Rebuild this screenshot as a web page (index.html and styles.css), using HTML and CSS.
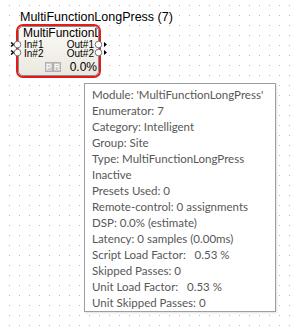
FILE: index.html
```html
<!DOCTYPE html>
<html lang="en">
<head>
    <meta charset="UTF-8">
    <title>MultiFunctionLongPress</title>
    <link rel="stylesheet" href="styles.css">
</head>
<body>
    <div class="canvas">
        <div class="module">
            <div class="module-name">MultiFunctionLongPress (7)</div>
            <div class="block">
                <div class="block-inner">
                    <div class="block-title">MultiFunctionLongPress</div>
                    <div class="pins"><span>In#1</span><span>Out#1</span></div>
                    <div class="pins"><span>In#2</span><span>Out#2</span></div>
                    <div class="status">
                        <span class="flag">P</span><span class="flag">R</span>
                        <span class="dsp">0.0%</span>
                    </div>
                </div>
                <svg class="ports" width="100" height="20" viewBox="0 0 100 20">
                    <path d="M-5 2.5 L-2.5 4.5 L-5 6.5 M-5 10.5 L-2.5 12.5 L-5 14.5" fill="none" stroke="#000" stroke-width="1.6"/>
                    <circle cx="1.5" cy="4.5" r="3.3" fill="#fff" stroke="#777" stroke-width="1"/>
                    <circle cx="1.5" cy="12.5" r="3.3" fill="#fff" stroke="#777" stroke-width="1"/>
                    <circle cx="82.5" cy="4.5" r="3.3" fill="#fff" stroke="#777" stroke-width="1"/>
                    <circle cx="82.5" cy="12.5" r="3.3" fill="#fff" stroke="#777" stroke-width="1"/>
                    <path d="M88 2 L91 4.5 L88 7 Z M88 10 L91 12.5 L88 15 Z" fill="#000"/>
                </svg>
            </div>
        </div>

        <div class="tooltip">
            <div>Module: 'MultiFunctionLongPress'</div>
            <div>Enumerator: 7</div>
            <div>Category: Intelligent</div>
            <div>Group: Site</div>
            <div>Type: MultiFunctionLongPress</div>
            <div>Inactive</div>
            <div>Presets Used: 0</div>
            <div>Remote-control: 0 assignments</div>
            <div>DSP: 0.0% (estimate)</div>
            <div>Latency: 0 samples (0.00ms)</div>
            <div>Script Load Factor: &nbsp; 0.53 %</div>
            <div>Skipped Passes: 0</div>
            <div>Unit Load Factor: &nbsp; 0.53 %</div>
            <div>Unit Skipped Passes: 0</div>
        </div>
    </div>
</body>
</html>
```

FILE: styles.css
```css
body {
    margin: 0;
    width: 291px;
    height: 328px;
    overflow: hidden;
    background: #fff;
    font-family: "Liberation Sans", Arial, sans-serif;
}
.canvas {
    width: 291px;
    height: 328px;
    padding-top: 11px;
    box-sizing: border-box;
    background-image: radial-gradient(circle at 9.5px 5.5px, #b8b8b8 0.7px, transparent 1px);
    background-size: 10px 10px;
}
.module {
    margin-left: 16px;
    width: 85px;
}
.module-name {
    height: 13px;
    line-height: 13px;
    margin-left: 4px;
    font-size: 12.5px;
    color: #000;
    white-space: nowrap;
}
.block {
    position: relative;
    height: 54px;
    box-sizing: border-box;
    border: 2px solid #e41b1b;
    border-radius: 7px;
}
.block-inner {
    height: 100%;
    box-sizing: border-box;
    border: 1px solid #8c8c8c;
    border-radius: 5px;
    background: linear-gradient(#fbfaf6, #ebe8df);
    padding: 0 0 0 5px;
    overflow: hidden;
}
.block-title {
    font-size: 12px;
    line-height: 13px;
    white-space: nowrap;
    overflow: hidden;
    margin: 0 0 0 -1px;
}
.pins {
    display: flex;
    justify-content: space-between;
    font-size: 10px;
    line-height: 9px;
    padding-right: 4px;
}
.pins:first-of-type {
    margin-top: 1px;
}
.status {
    display: flex;
    align-items: center;
    justify-content: flex-end;
    margin-top: 3px;
    padding-right: 1px;
}
.flag {
    width: 8px;
    height: 10px;
    box-sizing: border-box;
    border: 1px solid #b0b0b0;
    background: #cfcfcf;
    color: #fbfbfb;
    font-size: 9px;
    line-height: 8px;
    text-align: center;
    font-weight: bold;
    text-shadow: 0 0 1px #999;
}
.dsp {
    margin-left: 9px;
    font-size: 12px;
    line-height: 12px;
}
.ports {
    position: absolute;
    left: -2px;
    top: 14px;
    overflow: visible;
}
.tooltip {
    margin: 5px 0 0 84px;
    width: 192px;
    box-sizing: border-box;
    padding: 3px 0 0 7px;
    border: 1px solid #9e9e9e;
    box-shadow: 1px 1px 2px rgba(0, 0, 0, 0.12);
    background: #fff;
    color: #575757;
    font-family: Lato, "Open Sans", sans-serif;
    font-size: 11.5px;
    line-height: 16px;
    white-space: nowrap;
}
```
